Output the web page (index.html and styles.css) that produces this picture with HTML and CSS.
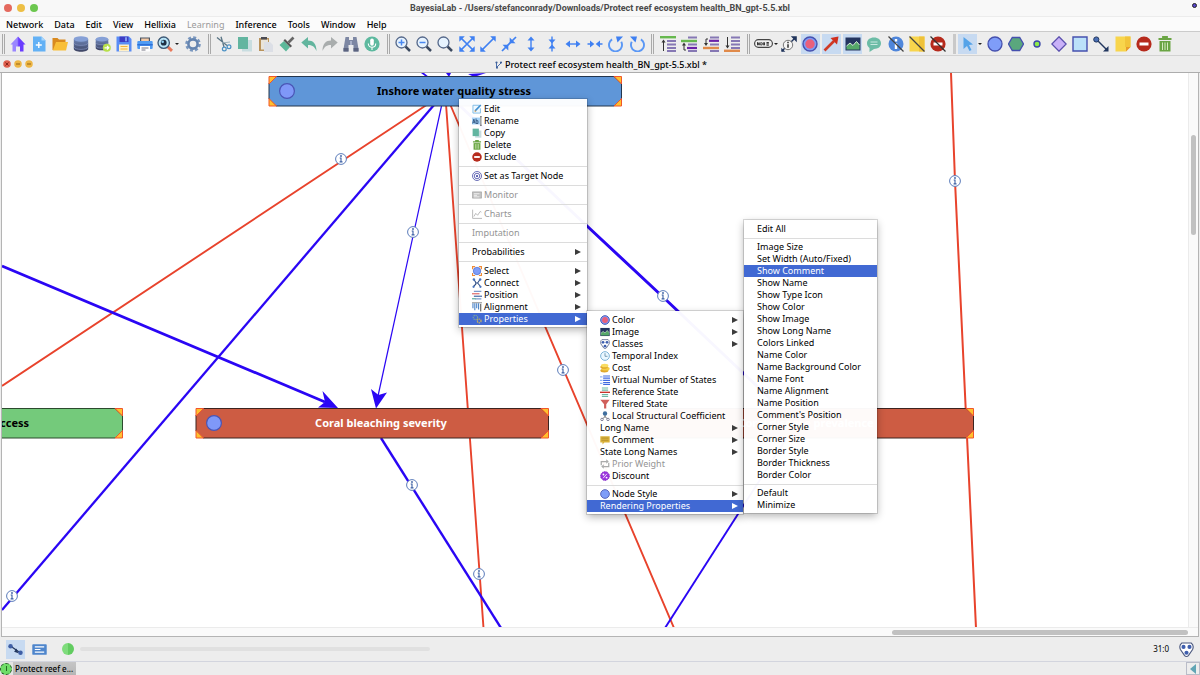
FILE: index.html
```
<!DOCTYPE html>
<html lang="en">
<head>
<meta charset="utf-8">
<title>BayesiaLab</title>
<link rel="stylesheet" href="styles.css">
</head>
<body>
<svg class="defs" aria-hidden="true">
  <defs>
    <linearGradient id="gHome"><stop offset="0.45" stop-color="#9a86ff"/><stop offset="0.55" stop-color="#6a3cff"/></linearGradient>
    <linearGradient id="gDb" x2="0" y2="1"><stop offset="0" stop-color="#6f86b8"/><stop offset="1" stop-color="#3c4260"/></linearGradient>
    <symbol id="home" viewBox="0 0 16 16"><path d="M8 .5 15.500 8.500h-2V15.500h-3.500v-5h-4v5H2.500V8.500H.5z" fill="url(#gHome)"/></symbol>
    <symbol id="newdoc" viewBox="0 0 16 16"><path d="M2 .5h8.500L14.500 4.500v11H2z" fill="#63b1f5"/><path d="M10.500.5v4h4z" fill="#a9d6fb"/><path d="M7.800 6v6M4.800 9h6" stroke="#fff" stroke-width="1.400"/></symbol>
    <symbol id="folder" viewBox="0 0 16 16"><path d="M.5 2h5l1.500 1.500h6.500V14H.5z" fill="#d98a1f"/><path d="M4 6h12l-2 8.500H.8z" fill="#f9bf38"/></symbol>
    <symbol id="db" viewBox="0 0 16 16"><path d="M.8 3v10c0 1.600 3.200 2.700 7.200 2.700s7.200-1.100 7.200-2.700V3z" fill="url(#gDb)"/><ellipse cx="8" cy="3" rx="7.200" ry="2.700" fill="#86a0d6"/><path d="M.8 7c1 1.800 4 2.300 7.200 2.300s6.200-.5 7.200-2.300M.8 11c1 1.800 4 2.300 7.200 2.300s6.200-.5 7.200-2.300" fill="none" stroke="#8797c4" stroke-width=".7"/></symbol>
    <symbol id="dbgo" viewBox="0 0 16 16"><use href="#db" width="14" height="15"/><circle cx="11.800" cy="11.800" r="4" fill="#b8e04a"/><path d="M9.500 11.800h4M12 10l1.800 1.800L12 13.600" stroke="#fff" stroke-width="1.200" fill="none"/></symbol>
    <symbol id="save" viewBox="0 0 16 16"><path d="M.5.5h12.500l2.500 2.500v12.500H.5z" fill="#5a8df5"/><path d="M3.500.5h9v5.500h-9z" fill="#3d3cc4"/><path d="M9 1.200h2v4H9z" fill="#7f9df0"/><path d="M3 8.500h10v7H3z" fill="#fff0c8"/><path d="M4.500 10.500h7M4.500 13h7" stroke="#f5b53b" stroke-width="1"/></symbol>
    <symbol id="print" viewBox="0 0 16 16"><path d="M3 1.500h10V6H3z" fill="#4b5563"/><path d="M4.200 2.500h7.600V6H4.200z" fill="#f4c9a4"/><rect x=".3" y="5" width="15.400" height="8" rx="1" fill="#4f9bf3"/><path d="M.3 8h15.400v1.500H.3z" fill="#2f6fd6"/><path d="M3 10h10v5.500H3z" fill="#fff"/><path d="M4.500 12h7M4.500 14h4" stroke="#667" stroke-width=".9"/></symbol>
    <symbol id="search" viewBox="0 0 16 16"><path d="M10.500 10.500 15 14.800" stroke="#e8785a" stroke-width="3"/><circle cx="6.700" cy="6.700" r="5.700" fill="#b9e4f8" stroke="#3d5875" stroke-width="1.300"/><circle cx="6.700" cy="6.700" r="2.900" fill="#1f3044"/><circle cx="5.700" cy="5.700" r="1.300" fill="#8fd1f3"/></symbol>
    <symbol id="gear" viewBox="0 0 16 16"><circle cx="8" cy="8" r="6.600" fill="none" stroke="#7896be" stroke-width="2.400" stroke-dasharray="3 2.180"/><circle cx="8" cy="8" r="4.600" fill="none" stroke="#6484b0" stroke-width="2.600"/></symbol>
    <symbol id="cut" viewBox="0 0 16 16"><path d="M1 1.500 11 9.500M5 .8 8 11" stroke="#587384" stroke-width="1.300" fill="none"/><path d="M6 7 14 6" stroke="#9fb3bd"/><circle cx="8.300" cy="13" r="1.900" fill="none" stroke="#4a90c4" stroke-width="1.200"/><circle cx="13" cy="10.700" r="1.900" fill="none" stroke="#4a90c4" stroke-width="1.200"/></symbol>
    <symbol id="copy" viewBox="0 0 16 16"><path d="M5 4h10v11.500H5z" fill="#c8dde0"/><path d="M1 1h10v12H1z" fill="#62b5a0"/></symbol>
    <symbol id="paste" viewBox="0 0 16 16"><path d="M1 2h10v13H1z" fill="#b9935c"/><path d="M3 3.500h7v10H3z" fill="#e9e4da"/><path d="M3 1h6v2.500H3z" fill="#4a4a52"/><path d="M6 6h6l3 3v7H6z" fill="#dcdfe6"/></symbol>
    <symbol id="brush" viewBox="0 0 16 16"><path d="M5 5l6 6-4 4.500L.5 9z" fill="#5cb89a"/><path d="M4.500 4.500 6 3l7 7-1.500 1.500z" fill="#555"/><path d="M9.500 6.500 14.500 1.500" stroke="#666" stroke-width="2.600"/></symbol>
    <symbol id="undo" viewBox="0 0 16 16"><path d="M.3 6.500 7 1v3.500c5 0 8.500 3 8.500 10.500C13.500 10.500 11 9 7 9v3.500z" fill="#62b59e"/></symbol>
    <symbol id="redo" viewBox="0 0 16 16"><path d="M15.700 6.500 9 1v3.500C4 4.500.5 7.500.5 15 2.500 10.500 5 9 9 9v3.500z" fill="#a9adad"/></symbol>
    <symbol id="bino" viewBox="0 0 16 16"><path d="M2.500 1H6v3h4V1h3.500l2 12v2.500h-5V9h-5v6.500h-5V13z" fill="#7d87a3"/><path d="M.5 12h5v3.500h-5zM10.500 12h5v3.500h-5z" fill="#5c6480"/><path d="M7 5h2v4H7z" fill="#a9b1c9"/></symbol>
    <symbol id="mic" viewBox="0 0 16 16"><circle cx="8" cy="8" r="7.600" fill="#5db99f"/><rect x="6.200" y="2.500" width="3.600" height="7.200" rx="1.800" fill="#fff"/><path d="M4.300 7.500c0 5 7.400 5 7.400 0M8 11.500v2.500" stroke="#fff" fill="none" stroke-width="1.100"/></symbol>
    <symbol id="lens" viewBox="0 0 16 16"><path d="M10.500 10.500 15 15" stroke="#3c4a60" stroke-width="2.500"/><circle cx="6.500" cy="6.500" r="5.500" fill="#e6f3ff" stroke="#55688a" stroke-width="1.300"/></symbol>
    <symbol id="zin" viewBox="0 0 16 16"><use href="#lens"/><path d="M6.500 3.500v6M3.500 6.500h6" stroke="#4a88f0" stroke-width="1.500"/></symbol>
    <symbol id="zout" viewBox="0 0 16 16"><use href="#lens"/><path d="M3.500 6.500h6" stroke="#4a88f0" stroke-width="1.500"/></symbol>
    <symbol id="expand" viewBox="0 0 16 16"><path d="M2 2l12 12M14 2 2 14" stroke="#3f80f2" stroke-width="1.700"/><path d="M.3.3h5.500L.3 5.800zM15.700.3v5.500L10.200.3zM.3 15.700v-5.500l5.500 5.500zM15.700 15.700h-5.500l5.500-5.500z" fill="#3f80f2"/></symbol>
    <symbol id="diagout" viewBox="0 0 16 16"><path d="M14 2 2 14" stroke="#3f80f2" stroke-width="1.700"/><path d="M15.700.3v5.500L10.200.3zM.3 15.700v-5.500l5.500 5.500z" fill="#3f80f2"/></symbol>
    <symbol id="diagin" viewBox="0 0 16 16"><path d="M15 1 1 15" stroke="#3f80f2" stroke-width="1.700"/><path d="M8.700 7.300V1.500l5.800 5.800zM7.300 8.700v5.800L1.500 8.700z" fill="#3f80f2"/></symbol>
    <symbol id="vout" viewBox="0 0 16 16"><path d="M8 2v12" stroke="#3f80f2" stroke-width="1.400"/><path d="M8 .5l3.500 4h-7zM8 15.500l3.500-4h-7z" fill="#3f80f2"/></symbol>
    <symbol id="vin" viewBox="0 0 16 16"><path d="M8 .5v15" stroke="#3f80f2" stroke-width="1.400"/><path d="M8 7.400l3.500-4h-7zM8 8.600l3.500 4h-7z" fill="#3f80f2"/></symbol>
    <symbol id="hout" viewBox="0 0 16 16"><path d="M2 8h12" stroke="#3f80f2" stroke-width="1.400"/><path d="M.5 8l4.500-3.500v7zM15.500 8l-4.500-3.500v7z" fill="#3f80f2"/></symbol>
    <symbol id="hin" viewBox="0 0 16 16"><path d="M.5 8h5.500M10 8h5.500" stroke="#3f80f2" stroke-width="1.400"/><path d="M7.300 8 3 4.500v7zM8.700 8l4.300-3.500v7z" fill="#3f80f2"/></symbol>
    <symbol id="rotl" viewBox="0 0 16 16"><path d="M3 4.500a6.500 6.500 0 1 0 9.500 0" transform="rotate(15 8 8)" fill="none" stroke="#5a97f5" stroke-width="1.900"/><path d="M8 .5h7L9.500 6.500z" fill="#3f80f2"/></symbol>
    <symbol id="rotr" viewBox="0 0 16 16"><path d="M3.500 4.500a6.500 6.500 0 1 0 9.500 0" transform="rotate(-15 8 8)" fill="none" stroke="#5a97f5" stroke-width="1.900"/><path d="M8 .5H1L6.500 6.500z" fill="#3f80f2"/></symbol>
    <symbol id="ord1" viewBox="0 0 16 16"><path d="M7 5h9M7 8.500h9M7 12h9M7 15h9" stroke="#8678b4" stroke-width="2"/><path d="M0 1.200h16" stroke="#66b84e" stroke-width="2.400"/><path d="M3.500 5v10" stroke="#333"/><path d="M3.500 3.500l2 3h-4z" fill="#333"/></symbol>
    <symbol id="ord2" viewBox="0 0 16 16"><path d="M7 1.500h9M7 8.500h9M7 15h9" stroke="#8678b4" stroke-width="2"/><path d="M0 5h16" stroke="#66b84e" stroke-width="2.400"/><path d="M6 12h10" stroke="#6a22a8" stroke-width="2.200"/><path d="M3 8v6h2" stroke="#333" fill="none"/><path d="M3 6.500l2 3H1z" fill="#333"/></symbol>
    <symbol id="ord3" viewBox="0 0 16 16"><path d="M7 1.500h9M7 8.500h9M7 15h9" stroke="#8678b4" stroke-width="2"/><path d="M0 12h16" stroke="#e08a4a" stroke-width="2.400"/><path d="M6 4.800h10" stroke="#6a22a8" stroke-width="2.200"/><path d="M5 3H3v5" stroke="#333" fill="none"/><path d="M3 10 5 7H1z" fill="#333"/></symbol>
    <symbol id="ord4" viewBox="0 0 16 16"><path d="M7 1.500h9M7 5h9M7 8.500h9M7 12h9" stroke="#8678b4" stroke-width="2"/><path d="M0 14.800h16" stroke="#e08a4a" stroke-width="2.400"/><path d="M3.500 1v10" stroke="#333"/><path d="M3.500 12.500l2-3h-4z" fill="#333"/></symbol>
    <symbol id="pill" viewBox="0 0 16 16"><rect x=".5" y="4.800" width="15" height="6.400" rx="3.200" fill="#f0f0f0" stroke="#444" stroke-width="1"/><path d="M3 7v2.500M4.300 7v2.500M3 7.200l1.300 2M7.800 7v2.500M8.800 7v2.500M10.500 7.200h2M10.500 8.300h2M10.500 9.400h2" stroke="#222" stroke-width=".8"/><circle cx="6" cy="8.300" r="1" fill="none" stroke="#222" stroke-width=".7"/></symbol>
    <symbol id="iarrow" viewBox="0 0 16 16"><path d="M1 15 14 2" stroke="#20355c" stroke-width="1.500"/><path d="M15.800.2v6L9.800.2zM.3 15.700v-4l4 4z" fill="#20355c"/><circle cx="7" cy="9" r="4.700" fill="#f5f5f5" stroke="#777"/><path d="M7 8.200v3.500M7 5.800v1.400" stroke="#222" stroke-width="1.400"/></symbol>
    <symbol id="target" viewBox="0 0 16 16"><circle cx="8" cy="8" r="7" fill="#7d9bf5" stroke="#4550ae" stroke-width="1.400"/><circle cx="8" cy="8" r="4.700" fill="#e95f7b"/></symbol>
    <symbol id="redarrow" viewBox="0 0 16 16"><path d="M1.500 14.500 11 5" stroke="#cf3a26" stroke-width="2.600"/><path d="M15.500.5 14 8.500 7.500 2z" fill="#cf2f1f"/></symbol>
    <symbol id="image" viewBox="0 0 16 16"><path d="M.5 1.500h15v13H.5z" fill="#24355f"/><path d="M1.500 13.500V10L5 7l3 2.500 3.500-4 3 3.500v4.500z" fill="#55a868"/><path d="M1.500 10 5 7l3 2.500 3.500-4 3 3.500" stroke="#d7ead9" fill="none"/></symbol>
    <symbol id="bubble" viewBox="0 0 16 16"><path d="M8 1.500c4.200 0 7 2.400 7 5.800S12.200 13 8 13l-4.500 3v-4C2 11 1 9.500 1 7.300c0-3.400 2.800-5.800 7-5.800z" fill="#6cbca6"/><path d="M4.500 6h7M4.500 8.500h7" stroke="#c7e8df" stroke-width="1.100"/></symbol>
    <symbol id="infooff" viewBox="0 0 16 16"><circle cx="8" cy="8" r="7.500" fill="#4f86db"/><path d="M8 7v6M8 3v2.500" stroke="#fff" stroke-width="2.400"/><path d="M.5.5l15 15" stroke="#444" stroke-width="1.200"/></symbol>
    <symbol id="note" viewBox="0 0 16 16"><path d="M.5.5h15v10.500l-4.500 4.500H.5z" fill="#f8d54c"/><path d="M10 .5h5.500V11H10z" fill="#f2c43a"/><path d="M15.500 11 11 15.500V11z" fill="#e89a2c"/></symbol>
    <symbol id="noteoff" viewBox="0 0 16 16"><path d="M.5.5h15v15H.5z" fill="#f8d54c"/><path d="M10 .5h5.500v15H10z" fill="#efc23a"/><path d="M.5.5l15 15" stroke="#444" stroke-width="1.200"/></symbol>
    <symbol id="stop" viewBox="0 0 16 16"><circle cx="8" cy="8" r="7.600" fill="#b62a1c"/><path d="M3.500 6.500h9v3h-9z" fill="#fff"/></symbol>
    <symbol id="stopoff" viewBox="0 0 16 16"><use href="#stop"/><path d="M.5.5l15 15" stroke="#333" stroke-width="1.200"/></symbol>
    <symbol id="cursor" viewBox="0 0 16 16"><path d="M3.500 1 13 8.500l-4 .5 2.500 5-2 1L7 10l-3.500 3z" fill="#55a3e8"/></symbol>
    <symbol id="circle" viewBox="0 0 16 16"><circle cx="8" cy="8" r="7" fill="#7f9df8" stroke="#4550ae" stroke-width="1.300"/></symbol>
    <symbol id="hexa" viewBox="0 0 16 16"><path d="M4.300 1.500h7.400L15.500 8l-3.800 6.500H4.300L.5 8z" fill="#5aa77d" stroke="#4550ae" stroke-width="1.300"/></symbol>
    <symbol id="dot" viewBox="0 0 16 16"><circle cx="8" cy="8" r="3" fill="#8eea4a" stroke="#3a48a8" stroke-width="1.400"/></symbol>
    <symbol id="diamond" viewBox="0 0 16 16"><path d="M8 .8 15.200 8 8 15.200.8 8z" fill="#c9b1f8" stroke="#5a4fae" stroke-width="1.300"/></symbol>
    <symbol id="square" viewBox="0 0 16 16"><path d="M1 1h14v14H1z" fill="#bbe1f9" stroke="#4550ae" stroke-width="1.400"/></symbol>
    <symbol id="link" viewBox="0 0 16 16"><path d="M4 4l10 10" stroke="#22375f" stroke-width="1.400"/><circle cx="3.300" cy="3.500" r="2.600" fill="#4a6fb5" stroke="#22375f"/><path d="M15.500 15.500H10l5.500-5.500z" fill="#22375f"/></symbol>
    <symbol id="trash" viewBox="0 0 16 16"><path d="M1.500 3h13M6 2.500V1h4v1.500" stroke="#6aa544" stroke-width="1.800" fill="none"/><path d="M2.500 5h11v10.500h-11z" fill="#6aa544"/><path d="M5.500 6.500v7.500M8 6.500v7.500M10.500 6.500v7.500" stroke="#d4ebc0" stroke-width="1"/></symbol>
    <symbol id="edit" viewBox="0 0 16 16"><path d="M12 2H1.500v12.500h12V7" fill="#eef8ff" stroke="#7fbce6" stroke-width="1.500"/><path d="M5 11 14 1.500" stroke="#3f8fd0" stroke-width="2.500"/><path d="M4 12.500l.6-3L7 12z" fill="#d9903c"/></symbol>
    <symbol id="rename" viewBox="0 0 16 16"><path d="M0 2.500h13v11H0z" fill="#a5d2f7"/><path d="M1 12 3 5l2 7M1.800 10h2.500M6.500 4v8h3V7.500h-3" stroke="#284a75" fill="none" stroke-width="1.300"/><path d="M13 1h2.500M13 15h2.500M14.200 1v14" stroke="#222"/></symbol>
    <symbol id="rings" viewBox="0 0 16 16"><g fill="none" stroke="#4a4fa8" stroke-width="1.300"><circle cx="8" cy="8" r="7.200"/><circle cx="8" cy="8" r="4.400"/></g><circle cx="8" cy="8" r="1.800" fill="#4a4fa8"/></symbol>
    <symbol id="monitor" viewBox="0 0 16 16"><path d="M.7 3h14.600v10H.7z" fill="#c2c2c2" stroke="#9a9a9a"/><path d="M3 6h9M3 8.500h5M3 11h9" stroke="#fff" stroke-width="1.200"/></symbol>
    <symbol id="chart" viewBox="0 0 16 16"><path d="M1 1v14h15M3 12l3-5 3 3 4-6 2 1" fill="none" stroke="#aaa" stroke-width="1.300"/></symbol>
    <symbol id="select" viewBox="0 0 16 16"><circle cx="8" cy="8" r="6" fill="#7f9df8" stroke="#3f62c8"/><path d="M.8 5V.8H5M11 .8h4.200V5M.8 11v4.200H5M11 15.200h4.200V11" stroke="#f08a34" stroke-width="2" fill="none"/></symbol>
    <symbol id="connect" viewBox="0 0 16 16"><path d="M3 2l3 5v3l-4 4M13 2 9 8l5 6M6 8h3" stroke="#2f4d85" fill="none" stroke-width="1.700"/><g fill="#4a74bd"><circle cx="3" cy="2.500" r="2"/><circle cx="13" cy="2.500" r="2"/><circle cx="2.500" cy="14" r="1.800"/><circle cx="13.500" cy="14" r="1.800"/></g></symbol>
    <symbol id="position" viewBox="0 0 16 16"><path d="M3 2h12M5 14h10" stroke="#7c9bcc" stroke-width="2"/><path d="M0 6h12" stroke="#e0706e" stroke-width="2"/><path d="M3 10h13" stroke="#4d6fa8" stroke-width="2"/><path d="M0 14h6" stroke="#5fb0a0" stroke-width="2"/></symbol>
    <symbol id="align" viewBox="0 0 16 16"><path d="M0 1.200h16" stroke="#555"/><path d="M1.500 2v8M4.500 2v11M7.500 2v8M10.500 2v10" stroke="#4f86c8" stroke-width="1.800"/><path d="M14 3v12" stroke="#222" stroke-width="1.300"/></symbol>
    <symbol id="props" viewBox="0 0 16 16"><circle cx="5.500" cy="5.500" r="3.500" fill="none" stroke="#7aa09c" stroke-width="2" stroke-dasharray="2 1"/><circle cx="11.500" cy="11" r="3" fill="none" stroke="#c6b060" stroke-width="2" stroke-dasharray="2 1"/></symbol>
    <symbol id="classes" viewBox="0 0 16 16"><path d="M3 1h10c2 1.500 2.500 4.500 1.500 7L10 14.500c-1 1.200-3 1.200-4 0L1.500 8C.5 5.500 1 2.500 3 1z" fill="#fff" stroke="#4d5a80" stroke-width="1.200"/><g fill="#3f5fae"><circle cx="4.800" cy="5.200" r="2.200"/><circle cx="11.200" cy="5.200" r="2.200"/><circle cx="8" cy="11.500" r="2.200"/></g></symbol>
    <symbol id="clock" viewBox="0 0 16 16"><circle cx="8" cy="8" r="7" fill="#e9f7ff" stroke="#7fb5d8" stroke-width="1.600"/><path d="M8 3.500V8.500h4" stroke="#56809c" fill="none" stroke-width="1.200"/></symbol>
    <symbol id="coins" viewBox="0 0 16 16"><ellipse cx="7" cy="12" rx="6.500" ry="3" fill="#e0a82a"/><ellipse cx="9" cy="9" rx="6.500" ry="3" fill="#f4cd45"/><ellipse cx="6.500" cy="6.500" rx="6" ry="2.800" fill="#e0a82a"/><ellipse cx="7.500" cy="4" rx="6" ry="2.800" fill="#f9dc62"/></symbol>
    <symbol id="list" viewBox="0 0 16 16"><path d="M5 1.500h11M5 5h11M5 8.500h11M5 12h11M5 15h11" stroke="#3f6ae0" stroke-width="1.800"/><path d="M0 3h4M0 8.500h4M0 13.500h4" stroke="#8fb3f5" stroke-width="2"/></symbol>
    <symbol id="refstate" viewBox="0 0 16 16"><path d="M3 1.500h10M3 5h10M3 12h10M3 15h10" stroke="#6db7a4" stroke-width="1.800"/><path d="M0 8.500h16" stroke="#c9352c" stroke-width="2.200"/></symbol>
    <symbol id="funnel" viewBox="0 0 16 16"><path d="M.5 1h15L10 8.500V15H6.500V8.500z" fill="#d0605c"/></symbol>
    <symbol id="lsc" viewBox="0 0 16 16"><path d="M8 5v5M3.500 13 8 9l4.500 4" stroke="#555" fill="none" stroke-width="1.200"/><circle cx="8" cy="4" r="3.500" fill="#3f6e9e"/><circle cx="3.200" cy="13.500" r="2" fill="#fff" stroke="#446"/><circle cx="12.800" cy="13.500" r="2" fill="#fff" stroke="#446"/></symbol>
    <symbol id="comment" viewBox="0 0 16 16"><path d="M.5 2h15v10H7l-3 3v-3H.5z" fill="#d9b13a"/><path d="M2.500 5h11M2.500 8.500h11" stroke="#a3842a"/></symbol>
    <symbol id="cycle" viewBox="0 0 16 16"><path d="M2 10V4h9M14 6v6H5" stroke="#aaa" fill="none" stroke-width="2"/><path d="M10 .5l4 3.500-4 3.500zM6 8.500 2 12l4 3.500z" fill="#aaa"/></symbol>
    <symbol id="percent" viewBox="0 0 16 16"><circle cx="8" cy="8" r="7" fill="#9b35dd" stroke="#7e22c4" stroke-width="1.500" stroke-dasharray="2 1"/><path d="M5 11.500 11 4.500" stroke="#fff" stroke-width="1.300"/><circle cx="5.500" cy="5.500" r="1.500" fill="#fff"/><circle cx="10.500" cy="10.500" r="1.500" fill="#fff"/></symbol>
    <symbol id="relation" viewBox="0 0 16 16"><path d="M3 4.500 13 11.500" stroke="#22375f" stroke-width="1.400"/><circle cx="2.700" cy="4.500" r="2.400" fill="#3f5fa5"/><circle cx="13.300" cy="11.500" r="2.400" fill="#3f5fa5"/><path d="M11 12 6.500 10.500 9 7z" fill="#22375f"/></symbol>
    <symbol id="panel" viewBox="0 0 16 16"><rect x=".3" y="2.300" width="15.400" height="11.400" rx="1" fill="#4f86cc"/><path d="M3 5.300h10M3 8h6M3 10.700h10" stroke="#fff" stroke-width="1.300"/></symbol>
    <symbol id="branch" viewBox="0 0 16 16"><path d="M3 3v11M3 13l9-9" stroke="#4a6fae" stroke-width="2" fill="none"/><circle cx="3" cy="3" r="2.200" fill="#3f6098"/><circle cx="12" cy="3" r="2.200" fill="#3f6098"/><circle cx="4" cy="13.500" r="2" fill="#3f6098"/></symbol>
    <symbol id="info" viewBox="0 0 12 12"><circle cx="6" cy="6" r="5.400" fill="#fff" stroke="#5b7cba" stroke-width="1"/><path d="M6 5v3.800M4.700 5H6.500M4.600 8.900h2.900" stroke="#3b5fa3" stroke-width="1.100" fill="none"/><circle cx="6" cy="3" r=".9" fill="#3b5fa3"/></symbol>
    <symbol id="winclose" viewBox="0 0 16 16"><circle cx="8" cy="8" r="7.500" fill="#e0604f"/><path d="M5 5l6 6M11 5l-6 6" stroke="#7a1d12" stroke-width="1.800"/></symbol>
    <symbol id="winmin" viewBox="0 0 16 16"><circle cx="8" cy="8" r="7.500" fill="#edb645"/><path d="M4 8h8" stroke="#8a5a10" stroke-width="1.800"/></symbol>
  </defs>
</svg>

<div class="app">
  <header class="titlebar">
    <div class="lights"><i class="red"></i><i class="yellow"></i><i class="green"></i></div>
    <h1>BayesiaLab - /Users/stefanconrady/Downloads/Protect reef ecosystem health_BN_gpt-5.5.xbl</h1>
    <i class="spark"></i>
  </header>
  <nav class="menubar">
    <button>Network</button><button>Data</button><button>Edit</button><button>View</button><button>Hellixia</button><button disabled>Learning</button><button>Inference</button><button>Tools</button><button>Window</button><button>Help</button>
  </nav>
  <div class="toolbar">
    <i class="grip"></i>
    <div class="tools file">
      <button aria-label="Home"><svg><use href="#home"/></svg></button>
      <button aria-label="New"><svg><use href="#newdoc"/></svg></button>
      <button aria-label="Open"><svg><use href="#folder"/></svg></button>
      <button aria-label="Data source"><svg><use href="#db"/></svg></button>
      <button aria-label="Import data"><svg><use href="#dbgo"/></svg></button>
      <button aria-label="Save"><svg><use href="#save"/></svg></button>
      <button aria-label="Print"><svg><use href="#print"/></svg></button>
      <button aria-label="Search" class="drop"><svg><use href="#search"/></svg></button>
      <button aria-label="Settings"><svg><use href="#gear"/></svg></button>
    </div>
    <i class="grip"></i>
    <div class="tools clip">
      <button aria-label="Cut"><svg><use href="#cut"/></svg></button>
      <button aria-label="Copy"><svg><use href="#copy"/></svg></button>
      <button aria-label="Paste"><svg><use href="#paste"/></svg></button>
      <button aria-label="Format painter"><svg><use href="#brush"/></svg></button>
      <button aria-label="Undo"><svg><use href="#undo"/></svg></button>
      <button aria-label="Redo"><svg><use href="#redo"/></svg></button>
      <button aria-label="Find"><svg><use href="#bino"/></svg></button>
      <button aria-label="Voice"><svg><use href="#mic"/></svg></button>
    </div>
    <i class="grip"></i>
    <div class="tools view">
      <button aria-label="Zoom in"><svg><use href="#zin"/></svg></button>
      <button aria-label="Zoom out"><svg><use href="#zout"/></svg></button>
      <button aria-label="Default zoom"><svg><use href="#lens"/></svg></button>
      <button aria-label="Best fit"><svg><use href="#expand"/></svg></button>
      <button aria-label="Stretch"><svg><use href="#diagout"/></svg></button>
      <button aria-label="Shrink"><svg><use href="#diagin"/></svg></button>
      <button aria-label="Stretch vertically"><svg><use href="#vout"/></svg></button>
      <button aria-label="Shrink vertically"><svg><use href="#vin"/></svg></button>
      <button aria-label="Stretch horizontally"><svg><use href="#hout"/></svg></button>
      <button aria-label="Shrink horizontally"><svg><use href="#hin"/></svg></button>
      <button aria-label="Rotate left"><svg><use href="#rotl"/></svg></button>
      <button aria-label="Rotate right"><svg><use href="#rotr"/></svg></button>
    </div>
    <i class="grip"></i>
    <div class="tools order">
      <button aria-label="Bring to front"><svg><use href="#ord1"/></svg></button>
      <button aria-label="Bring forward"><svg><use href="#ord2"/></svg></button>
      <button aria-label="Send backward"><svg><use href="#ord3"/></svg></button>
      <button aria-label="Send to back"><svg><use href="#ord4"/></svg></button>
    </div>
    <i class="grip"></i>
    <div class="tools show">
      <button aria-label="Node display" class="drop wide"><svg><use href="#pill"/></svg></button>
      <button aria-label="Arc information"><svg><use href="#iarrow"/></svg></button>
      <button aria-label="Node color" class="on"><svg><use href="#target"/></svg></button>
      <button aria-label="Arc color" class="on"><svg><use href="#redarrow"/></svg></button>
      <button aria-label="Images" class="on"><svg><use href="#image"/></svg></button>
      <button aria-label="Comments"><svg><use href="#bubble"/></svg></button>
      <button aria-label="Hide information"><svg><use href="#infooff"/></svg></button>
      <button aria-label="Hide notes"><svg><use href="#noteoff"/></svg></button>
      <button aria-label="Hide exclusions"><svg><use href="#stopoff"/></svg></button>
    </div>
    <i class="grip solid"></i>
    <div class="tools draw">
      <button aria-label="Selection" class="drop pick"><svg><use href="#cursor"/></svg></button>
      <button aria-label="Node"><svg><use href="#circle"/></svg></button>
      <button aria-label="Constraint"><svg><use href="#hexa"/></svg></button>
      <button aria-label="Function"><svg><use href="#dot"/></svg></button>
      <button aria-label="Utility"><svg><use href="#diamond"/></svg></button>
      <button aria-label="Decision"><svg><use href="#square"/></svg></button>
      <button aria-label="Arc"><svg><use href="#link"/></svg></button>
      <button aria-label="Note"><svg><use href="#note"/></svg></button>
      <button aria-label="Exclude"><svg><use href="#stop"/></svg></button>
      <button aria-label="Delete"><svg><use href="#trash"/></svg></button>
    </div>
  </div>
  <div class="docbar">
    <div class="winbuttons">
      <button aria-label="Close"><svg><use href="#winclose"/></svg></button>
      <button aria-label="Minimize"><svg><use href="#winmin"/></svg></button>
      <button aria-label="Restore"><svg><use href="#winmin"/></svg></button>
    </div>
    <h2><svg><use href="#branch"/></svg>Protect reef ecosystem health_BN_gpt-5.5.xbl *</h2>
  </div>

  <main class="workspace">
    <svg class="graph" role="img" aria-label="Bayesian network graph">
      <g transform="translate(-2 -73)">
        <g fill="none" stroke="#e8432c">
          <path d="M428 104 2 386M446 104 483.500 628M450 104 674 628" stroke-width="1.900"/>
          <path d="M951 73 955 181 976 628" stroke-width="2"/>
        </g>
        <g fill="none" stroke="#2a06f4">
          <path d="M434 105 2 610" stroke-width="2.300"/>
          <path d="M441.500 106 378 396" stroke-width="1.200"/>
          <path d="M458 104 587 226 663 297 778 406" stroke-width="3"/>
          <path d="M2 266 325 402" stroke-width="2.800"/>
          <path d="M381 438 501 628" stroke-width="2.400"/>
          <path d="M788 436 665 628" stroke-width="1.900"/>
        </g>
        <g fill="#2a06f4">
          <path d="M338 408 318 407.500 325 402 322.500 391z"/>
          <path d="M376 408.500 371 389 378.500 395 387 392.500z"/>
          <path d="M421 73h3l5 4-4-1zM446 73h5l-2 4zM468 74l18-1-12 4z"/>
        </g>
        <g>
          <path d="M276 76.500H614l7.500 7v15.500l-7.500 7H276l-7-7V83.500z" fill="#5f96d8" stroke="#24364d"/>
          <path d="M269 76.500h7.500l-7.500 7.500zM621.500 76.500h-7.500l7.500 7.500zM269 106h7.500l-7.500-7.500zM621.500 106h-7.500l7.500-7.500z" fill="#ffc02e" stroke="#f0562c"/>
          <circle cx="287" cy="91" r="7.400" fill="#7f98f8" stroke="#4a55b5" stroke-width="1.200"/>
          <text class="node-name" x="454" y="95">Inshore water quality stress</text>
        </g>
        <g>
          <path d="M-10 408.500H115l7.500 7v15.500l-7.500 7H-10z" fill="#74ca7b" stroke="#2c4a2e"/>
          <path d="M122.500 408.500h-7.500l7.500 7.500zM122.500 438h-7.500l7.500-7.500z" fill="#ffc02e" stroke="#f0562c"/>
          <text class="node-name end" x="29" y="427">Restoration success</text>
        </g>
        <g>
          <path d="M203 408.500H541l7.500 7v15.500l-7.500 7H203l-7-7v-15.500z" fill="#cd5c43" stroke="#3c2420"/>
          <path d="M196 408.500h7.500l-7.500 7.500zM548.500 408.500h-7.500l7.500 7.500zM196 438h7.500l-7.500-7.500zM548.500 438h-7.500l7.500-7.500z" fill="#ffc02e" stroke="#f0562c"/>
          <circle cx="214" cy="423" r="7.400" fill="#7f98f8" stroke="#4a55b5" stroke-width="1.200"/>
          <text class="node-name light" x="381" y="427">Coral bleaching severity</text>
        </g>
        <g>
          <path d="M628 408.500H966l7.500 7v15.500l-7.500 7H628l-7-7v-15.500z" fill="#cd5c43" stroke="#3c2420"/>
          <path d="M973.500 408.500h-7.500l7.500 7.500zM973.500 438h-7.500l7.500-7.500z" fill="#ffc02e" stroke="#f0562c"/>
          <text class="node-name light" x="806" y="427">Coral disease prevalence</text>
        </g>
        <g>
          <use href="#info" x="335" y="153" width="12" height="12"/>
          <use href="#info" x="407" y="226" width="12" height="12"/>
          <use href="#info" x="6" y="590" width="12" height="12"/>
          <use href="#info" x="406" y="479" width="12" height="12"/>
          <use href="#info" x="473" y="568" width="12" height="12"/>
          <use href="#info" x="557" y="364" width="12" height="12"/>
          <use href="#info" x="657" y="290" width="12" height="12"/>
          <use href="#info" x="949" y="175" width="12" height="12"/>
        </g>
      </g>
    </svg>
    <div class="vscroll"><i></i></div>
    <div class="hscroll"><i></i></div>
  </main>

  <footer class="status">
    <button class="on" aria-label="Modeling mode"><svg><use href="#relation"/></svg></button>
    <button aria-label="Validation mode"><svg><use href="#panel"/></svg></button>
    <i class="ball"></i>
    <i class="progress"></i>
    <output>31:0</output>
    <svg><use href="#classes"/></svg>
  </footer>
  <div class="tabs">
    <button class="tab"><i class="tabdot"></i><span>Protect reef e...</span></button>
    <button class="collapse" aria-label="Collapse"></button>
  </div>

  <div class="menu m1" role="menu">
    <button><svg><use href="#edit"/></svg>Edit</button>
    <button><svg><use href="#rename"/></svg>Rename</button>
    <button><svg><use href="#copy"/></svg>Copy</button>
    <button><svg><use href="#trash"/></svg>Delete</button>
    <button><svg><use href="#stop"/></svg>Exclude</button>
    <hr>
    <button><svg><use href="#rings"/></svg>Set as Target Node</button>
    <hr>
    <button disabled><svg><use href="#monitor"/></svg>Monitor</button>
    <hr>
    <button disabled><svg><use href="#chart"/></svg>Charts</button>
    <hr>
    <button disabled>Imputation</button>
    <hr>
    <button class="sub">Probabilities</button>
    <hr>
    <button class="sub"><svg><use href="#select"/></svg>Select</button>
    <button class="sub"><svg><use href="#connect"/></svg>Connect</button>
    <button class="sub"><svg><use href="#position"/></svg>Position</button>
    <button class="sub"><svg><use href="#align"/></svg>Alignment</button>
    <button class="sub active"><svg><use href="#props"/></svg>Properties</button>
  </div>

  <div class="menu m2" role="menu">
    <button class="sub"><svg><use href="#target"/></svg>Color</button>
    <button class="sub"><svg><use href="#image"/></svg>Image</button>
    <button class="sub"><svg><use href="#classes"/></svg>Classes</button>
    <button><svg><use href="#clock"/></svg>Temporal Index</button>
    <button><svg><use href="#coins"/></svg>Cost</button>
    <button><svg><use href="#list"/></svg>Virtual Number of States</button>
    <button><svg><use href="#refstate"/></svg>Reference State</button>
    <button><svg><use href="#funnel"/></svg>Filtered State</button>
    <button><svg><use href="#lsc"/></svg>Local Structural Coefficient</button>
    <button class="sub">Long Name</button>
    <button class="sub"><svg><use href="#comment"/></svg>Comment</button>
    <button class="sub">State Long Names</button>
    <button disabled><svg><use href="#cycle"/></svg>Prior Weight</button>
    <button><svg><use href="#percent"/></svg>Discount</button>
    <hr>
    <button class="sub"><svg><use href="#circle"/></svg>Node Style</button>
    <button class="sub active">Rendering Properties</button>
  </div>

  <div class="menu m3" role="menu">
    <button>Edit All</button>
    <hr>
    <button>Image Size</button>
    <button>Set Width (Auto/Fixed)</button>
    <button class="active">Show Comment</button>
    <button>Show Name</button>
    <button>Show Type Icon</button>
    <button>Show Color</button>
    <button>Show Image</button>
    <button>Show Long Name</button>
    <button>Colors Linked</button>
    <button>Name Color</button>
    <button>Name Background Color</button>
    <button>Name Font</button>
    <button>Name Alignment</button>
    <button>Name Position</button>
    <button>Comment's Position</button>
    <button>Corner Style</button>
    <button>Corner Size</button>
    <button>Border Style</button>
    <button>Border Thickness</button>
    <button>Border Color</button>
    <hr>
    <button>Default</button>
    <button>Minimize</button>
  </div>
</div>
</body>
</html>
```
FILE: styles.css
```
* { box-sizing: border-box; }
body { margin: 0; background: #ededed; font-family: "Noto Sans", "Open Sans", sans-serif; font-size: 9px; line-height: 12px; color: #000; }
button { margin: 0; padding: 0; border: 0; background: none; font: inherit; color: inherit; text-align: left; }
i { display: block; flex: none; }
.defs { position: absolute; width: 0; height: 0; }
.app { position: relative; display: flex; flex-direction: column; height: 100vh; overflow: hidden; }

.titlebar { flex: none; display: grid; grid-template-columns: 60px 1fr 60px; align-items: center; height: 17px; background: #f8f8f8; border-bottom: 1px solid #ececec; }
.titlebar h1 { margin: 0; text-align: center; font-family: Roboto, sans-serif; font-size: 9px; font-weight: 700; color: #4a4a4a; white-space: nowrap; }
.lights { display: flex; gap: 5px; padding-left: 4px; }
.lights i { width: 8px; height: 8px; border-radius: 50%; }
.red { background: #e4695e; }
.yellow { background: #edbf45; }
.green { background: #6cc74f; }
.spark { justify-self: end; align-self: start; width: 5px; height: 5px; margin: 3px 3px 0 0; border-radius: 50%; background: #5544cc; border: 1px solid #222; }

.menubar { flex: none; display: flex; gap: 11px; align-items: center; height: 15px; padding: 2px 0 0 6px; background: #fbfbfb; border-bottom: 1px solid #cbcbcb; font-weight: 500; }
.menubar button:disabled { color: #9a9a9a; font-weight: 400; }

.toolbar { flex: none; display: flex; align-items: center; height: 24px; padding-left: 2px; border-bottom: 1px solid #d2d2d2; }
.toolbar svg { display: block; width: 16px; height: 16px; }
.grip { width: 3px; height: 20px; border: solid #a9a9a9; border-width: 0 1px; }
.grip.solid { border: 0; background: #c9c9c9; }
.tools { display: grid; align-items: center; }
.tools button { display: grid; place-items: center; height: 20px; }
.tools button.on { justify-self: center; width: 19px; background: #c7daf1; }
.tools .drop { display: flex; align-items: center; gap: 2px; padding-left: 1px; }
.tools .wide svg { width: 19px; height: 19px; }
.tools .wide { gap: 1px; padding: 0; }
.tools .pick { padding-left: 2px; background: linear-gradient(#c7daf1, #c7daf1) 0 0 / 19px 100% no-repeat; }
.drop::after { content: ""; border: solid transparent; border-width: 2px 2px 0; border-top-color: #222; }
.file { grid-template-columns: repeat(7, 1fr) 26px 21px; width: 196px; margin: 0 5px 0 2px; }
.clip { grid-template-columns: repeat(8, 1fr); width: 170px; margin: 0 4px 0 2px; }
.view { grid-template-columns: repeat(12, 1fr); width: 256px; margin: 0 3px 0 2px; }
.order { grid-template-columns: repeat(4, 1fr); width: 86px; margin: 0 4px 0 3px; }
.show { grid-template-columns: 24px repeat(8, 1fr); width: 195px; margin: 0 4px; }
.draw { grid-template-columns: 26px repeat(9, 1fr); width: 218px; margin-left: 2px; }

.docbar { flex: none; display: grid; grid-template-columns: 60px 1fr 60px; align-items: center; height: 17px; border-bottom: 1px solid #adadad; }
.docbar h2 { display: flex; justify-content: center; align-items: center; gap: 2px; margin: 0; padding: 2px 0 0 2px; font-size: 9px; font-weight: 500; white-space: nowrap; }
.docbar h2 svg { width: 8px; height: 8px; }
.winbuttons { display: flex; gap: 3px; padding-left: 3px; }
.winbuttons svg { display: block; width: 8px; height: 8px; }

.workspace { flex: 1; min-height: 0; display: grid; grid-template: 1fr 9px / 1fr 10px; margin: 0 1px; background: #fff; border: solid #b4b4b4; border-width: 0 1px 1px; }
.graph { display: block; width: 100%; height: 100%; min-height: 0; overflow: hidden; }
.vscroll { padding: 62px 2px; background: #fafafa; border-left: 1px solid #ebebeb; }
.vscroll i { width: 5px; height: 100px; border-radius: 3px; background: #c1c1c1; }
.hscroll { display: flex; justify-content: flex-end; grid-column: 1 / -1; padding: 2px 10px 2px 0; background: #fafafa; border-top: 1px solid #ebebeb; }
.hscroll i { width: 25%; height: 5px; border-radius: 3px; background: #c1c1c1; }
.node-name { font-size: 11px; font-weight: 700; text-anchor: middle; }
.node-name.light { fill: #fff; }
.node-name.end { text-anchor: end; }

.status { flex: none; display: flex; align-items: center; height: 24px; padding: 0 6px; }
.status svg { display: block; width: 15px; height: 15px; }
.status button { display: grid; place-items: center; width: 19px; height: 19px; margin-right: 5px; }
.status button.on { background: #c7daf1; }
.ball { width: 12px; height: 12px; margin: 0 6px 0 8px; border-radius: 50%; background: linear-gradient(90deg, #7fdc7c 50%, #62cc60 50%); }
.progress { width: 350px; height: 4px; border-radius: 2px; background: #e0e0e0; }
.status output { margin: 0 10px 0 auto; font-size: 8px; }

.tabs { flex: none; display: flex; justify-content: space-between; height: 14px; border-top: 1px solid #d3d5de; }
.tab { display: flex; align-items: center; gap: 1px; width: 76px; background: #e4e4e4; white-space: nowrap; }
.tab span { flex: 1; padding-left: 2px; background: linear-gradient(#c6c6c6, #b6b6b6); line-height: 13px; font-size: 8px; font-weight: 500; }
.tabdot { width: 12px; height: 12px; border-radius: 50%; background: linear-gradient(#246b22, #246b22) center 2px / 1px 5px no-repeat, #6fdd68; border: 1px dashed #285a26; }
.collapse { width: 14px; border: 1px solid #b9bcc8; display: grid; place-items: center; }
.collapse::after { content: ""; border: solid transparent; border-width: 5px 6px 5px 0; border-right-color: #61a5b5; }

.menu { position: absolute; padding: 3px 0 2px; background: rgba(255, 255, 255, .97); box-shadow: 0 0 0 1px rgba(0, 0, 0, .14), 0 3px 8px rgba(0, 0, 0, .3); }
.menu button { display: flex; align-items: center; gap: 2px; width: 100%; height: 12px; padding: 0 6px 0 13px; white-space: nowrap; }
.menu button:disabled { color: #949494; }
.menu svg { display: block; flex: none; width: 10px; height: 10px; }
.menu hr { height: 1px; margin: 3px 0 2px; border: 0; background: #dcdcdc; }
.menu .sub::after { content: ""; margin-left: auto; border: solid transparent; border-width: 3px 0 3px 6px; border-left-color: #3c3c3c; }
.menu .active { background: #4169d3; color: #fff; }
.menu .active::after { border-left-color: #fff; }
.m1 { left: 459px; top: 99px; width: 128px; padding-top: 4px; }
.m1 hr { margin: 3px 0; }
.m2 { left: 587px; top: 311px; width: 156px; }
.m2 button { padding-right: 5px; }
.m3 { left: 744px; top: 220px; width: 133px; }
```
